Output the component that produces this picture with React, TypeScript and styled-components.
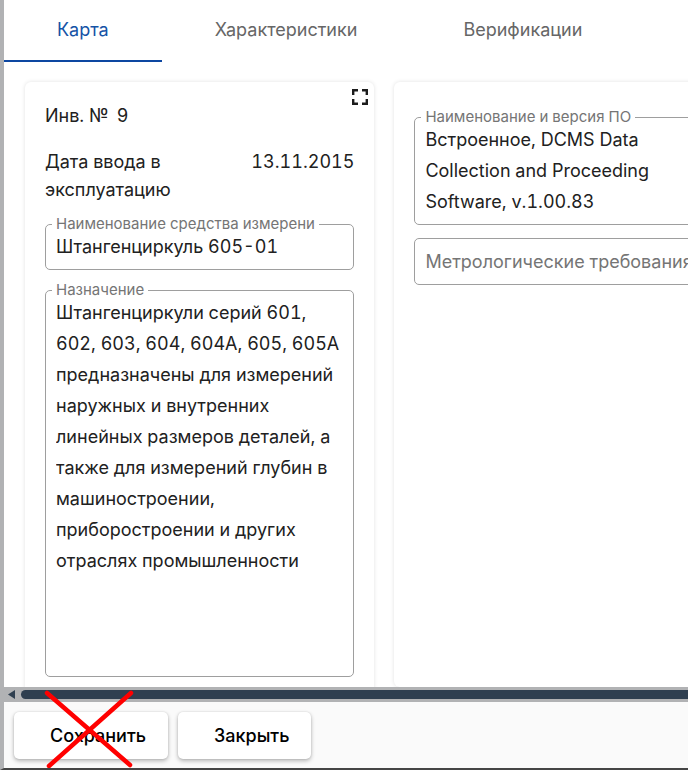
import React, { useId, useState } from "react";
import styled, { createGlobalStyle } from "styled-components";

const GlobalStyle = createGlobalStyle`
  *, *::before, *::after { box-sizing: border-box; }
  body {
    margin: 0;
    background: #fff;
    color: #212121;
    font-family: Inter, "Noto Sans", sans-serif;
    font-size: 18px;
    font-variant-numeric: tabular-nums;
    line-height: 28px;
  }
  button, textarea { font: inherit; color: inherit; }
`;

const Window = styled.div`
  display: flex;
  flex-direction: column;
  height: 100vh;
  overflow: hidden;
  border-left: 4px solid #b1b2b4;
  border-bottom: 2px solid #454545;
`;

const TabList = styled.div`
  display: flex;
  flex: none;
  height: 62px;
`;

const Tab = styled.button<{ $active: boolean }>`
  flex: none;
  padding: 0 53px;
  border: 0;
  border-bottom: 2px solid ${(p) => (p.$active ? "#0d47a1" : "transparent")};
  background: none;
  color: ${(p) => (p.$active ? "#1553a6" : "#666")};
  cursor: pointer;
`;

const Content = styled.main`
  display: flex;
  flex: 1 1 0;
  gap: 20px;
  min-height: 0;
  padding: 20px 21px 0;
  overflow: hidden;
`;

const Card = styled.section<{ $top: number }>`
  position: relative;
  display: flex;
  flex: 0 0 calc(51% + 22px);
  flex-direction: column;
  gap: 13px;
  min-height: 100%;
  height: max-content;
  padding: ${(p) => p.$top}px 20px 20px;
  border-radius: 6px;
  background: #fff;
  box-shadow: 0 0 4px rgba(0, 0, 0, 0.12);
`;

const ExpandButton = styled.button`
  position: absolute;
  top: 7px;
  right: 6px;
  display: flex;
  padding: 0;
  border: 0;
  background: none;
  cursor: pointer;
`;

const Inventory = styled.p`
  display: flex;
  gap: 8px;
  margin: 0 0 5px;
`;

const DateRow = styled.div`
  display: flex;
  justify-content: space-between;
  gap: 24px;
`;

const Outline = styled.fieldset`
  min-width: 0;
  margin: 0;
  padding: 0 10px 7px;
  border: 1px solid #9e9e9e;
  border-radius: 5px;
`;

const Legend = styled.legend`
  margin-left: -4px;
  padding: 0 4px;
  color: #757575;
  font-size: 15px;
  line-height: 14px;
  white-space: nowrap;
`;

const TextArea = styled.textarea`
  display: block;
  width: 100%;
  padding: 0;
  border: 0;
  outline: 0;
  resize: none;
  overflow: hidden;
  background: none;
  font-variant-numeric: inherit;
  line-height: 31px;
`;

const EmptyOutline = styled.div`
  padding: 7px 10px;
  border: 1px solid #9e9e9e;
  border-radius: 5px;
  overflow: hidden;
`;

const EmptyArea = styled(TextArea)`
  white-space: pre;
  &::placeholder { color: #757575; opacity: 1; }
`;

const ScrollTrack = styled.div`
  display: flex;
  flex: none;
  align-items: center;
  gap: 6px;
  height: 15px;
  padding-left: 4px;
  background: #b1b2b4;
`;

const ScrollArrow = styled.button`
  display: flex;
  padding: 0;
  border: 0;
  background: none;
`;

const ScrollThumb = styled.div`
  flex: 1;
  height: 9px;
  border-radius: 5px 0 0 5px;
  background: #2f3f50;
`;

const Footer = styled.footer`
  display: flex;
  flex: none;
  gap: 10px;
  padding: 10px 10px 9px;
  background: #fafafa;
`;

const ActionSlot = styled.div`
  position: relative;
  display: flex;
`;

const ActionButton = styled.button`
  height: 47px;
  padding: 0 22px 0 36px;
  border: 0;
  border-radius: 5px;
  background: #fff;
  color: #000;
  font-weight: 500;
  box-shadow: 0 2px 4px rgba(0, 0, 0, 0.28), 0 0 2px rgba(0, 0, 0, 0.12);
  cursor: pointer;
`;

const Cross = styled.svg`
  position: absolute;
  top: -22px;
  left: 28px;
  pointer-events: none;
`;

type FieldProps = { label: string; value: string; rows: number };

function Field({ label, value, rows }: FieldProps) {
  const id = useId();
  return (
    <Outline>
      <Legend>
        <label htmlFor={id}>{label}</label>
      </Legend>
      <TextArea id={id} rows={rows} defaultValue={value} spellCheck={false} />
    </Outline>
  );
}

const tabs = ["Карта", "Характеристики", "Верификации"];

export default function App() {
  const [active, setActive] = useState(0);
  return (
    <Window>
      <GlobalStyle />
      <TabList role="tablist">
        {tabs.map((name, i) => (
          <Tab
            key={name}
            role="tab"
            aria-selected={i === active}
            $active={i === active}
            onClick={() => setActive(i)}
          >
            {name}
          </Tab>
        ))}
      </TabList>
      <Content>
        <Card $top={20}>
          <ExpandButton aria-label="Развернуть">
            <svg width="16" height="16" viewBox="0 0 16 16" fill="none" stroke="#1c1c1c" strokeWidth="2.4">
              <path d="M1.2 6V1.2H6M10 1.2H14.8V6M14.8 10V14.8H10M6 14.8H1.2V10" />
            </svg>
          </ExpandButton>
          <Inventory>
            <span>Инв. №</span>
            <span>9</span>
          </Inventory>
          <DateRow>
            <span>Дата ввода в эксплуатацию</span>
            <time dateTime="2015-11-13">13.11.2015</time>
          </DateRow>
          <Field label="Наименование средства измерени" value="Штангенциркуль 605-01" rows={1} />
          <Field
            label="Назначение"
            value="Штангенциркули серий 601, 602, 603, 604, 604А, 605, 605А предназначены для измерений наружных и внутренних линейных размеров деталей, а также для измерений глубин в машиностроении, приборостроении и других отраслях промышленности"
            rows={12}
          />
        </Card>
        <Card $top={28}>
          <Field
            label="Наименование и версия ПО"
            value="Встроенное, DCMS Data Collection and Proceeding Software, v.1.00.83"
            rows={3}
          />
          <EmptyOutline>
            <EmptyArea
              rows={1}
              aria-label="Метрологические требования"
              placeholder="Метрологические требования"
            />
          </EmptyOutline>
        </Card>
      </Content>
      <ScrollTrack>
        <ScrollArrow aria-label="Прокрутить влево">
          <svg width="7" height="9" viewBox="0 0 7 9">
            <path d="M7 0V9L0 4.5Z" fill="#2f3f50" />
          </svg>
        </ScrollArrow>
        <ScrollThumb />
      </ScrollTrack>
      <Footer>
        <ActionSlot>
          <ActionButton>Сохранить</ActionButton>
          <Cross width="94" height="80" viewBox="0 0 94 80" fill="none" stroke="#f00" strokeWidth="4.5" strokeLinecap="round" aria-hidden="true">
            <path d="M5 3L88 75M89 3L7 76" />
          </Cross>
        </ActionSlot>
        <ActionButton>Закрыть</ActionButton>
      </Footer>
    </Window>
  );
}
